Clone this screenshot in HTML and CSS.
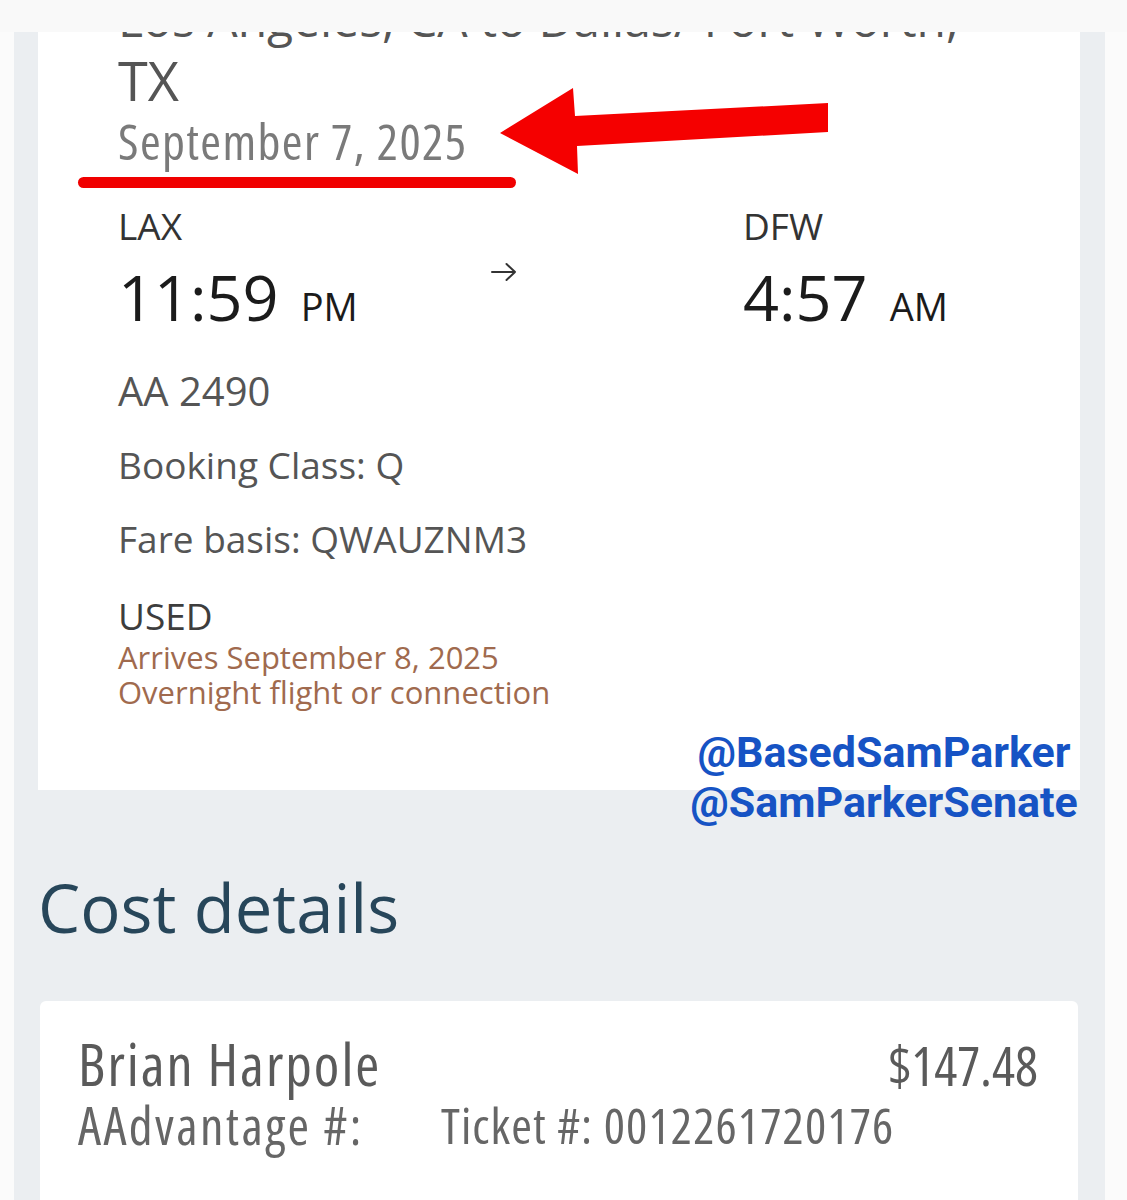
FILE: index.html
```html
<!DOCTYPE html>
<html lang="en">
<head>
<meta charset="utf-8">
<title>Trip details</title>
<link rel="stylesheet" href="styles.css">
</head>
<body>
<div class="page">
  <div class="panel">
    <section class="card trip">
      <div class="route">Los Angeles, CA to Dallas/ Fort Worth,</div>
      <div class="route-end">TX</div>
      <div class="date">September 7, 2025</div>
      <div class="legs">
        <div class="leg">
          <div class="code">LAX</div>
          <div class="time">11:59<span class="ampm">PM</span></div>
        </div>
        <div class="leg-arrow">
          <svg width="28" height="22" viewBox="0 0 28 22" aria-hidden="true"><path d="M2 11H25M16.5 3L25 11L16.5 19" fill="none" stroke="#333" stroke-width="2" stroke-linecap="round" stroke-linejoin="round"/></svg>
        </div>
        <div class="leg">
          <div class="code">DFW</div>
          <div class="time">4:57<span class="ampm">AM</span></div>
        </div>
      </div>
      <div class="info flight">AA 2490</div>
      <div class="info">Booking Class: Q</div>
      <div class="info">Fare basis: QWAUZNM3</div>
      <div class="status">USED</div>
      <div class="note">Arrives September 8, 2025<br>Overnight flight or connection</div>
    </section>
    <h2 class="section-title">Cost details</h2>
    <section class="card cost">
      <div class="cost-row">
        <span class="name">Brian Harpole</span>
        <span class="price">$147.48</span>
      </div>
      <div class="cost-sub">
        <span class="aadv">AAdvantage #:</span>
        <span class="ticket">Ticket #: 0012261720176</span>
      </div>
    </section>
  </div>
</div>

<div class="appbar"></div>

<svg class="annot" width="1127" height="200" viewBox="0 0 1127 200" aria-hidden="true">
  <polygon points="500,133 573,88 575,116 828,103 828,132 577,146 578,174" fill="#f50000"/>
  <rect x="78" y="177" width="438" height="11" rx="5.5" fill="#f00000"/>
</svg>

<div class="watermark">@BasedSamParker<br>@SamParkerSenate</div>
</body>
</html>
```

FILE: styles.css
```css
* { box-sizing: border-box; }
html, body { margin: 0; padding: 0; }
body {
  font-family: "Open Sans", "Noto Sans", sans-serif;
  background: #fbfbfb;
  width: 1127px;
  height: 1200px;
  overflow: hidden;
  position: relative;
}
.page {
  padding: 0 22px 0 14px;
}
.panel {
  background: #ebeef1;
  padding: 0 25px 0 24px;
  min-height: 1200px;
}
.card {
  background: #ffffff;
}
.trip {
  padding: 0 0 80px 80px;
  overflow: hidden;
}
.route {
  font-size: 48px;
  line-height: 62px;
  margin-top: -12px;
  color: #555;
  white-space: nowrap;
}
.route-end {
  font-size: 54px;
  line-height: 62px;
  margin-top: -1px;
  color: #555;
}
.date {
  font-size: 50px;
  line-height: 50px;
  margin-top: 5px;
  color: #7a7a7a;
  font-stretch: 75%;
  letter-spacing: 1.4px;
}
.legs {
  display: grid;
  grid-template-columns: 372px 253px 1fr;
  margin-top: 40px;
}
.code {
  font-size: 37px;
  line-height: 40px;
  color: #333;
}
.time {
  font-size: 63px;
  line-height: 70px;
  margin-top: 16px;
  color: #1b1b1b;
}
.ampm {
  font-size: 38px;
  margin-left: 22px;
}
.leg-arrow {
  padding-top: 55px;
}
.info {
  font-size: 37px;
  line-height: 46px;
  margin-top: 28px;
  color: #555;
}
.info.flight {
  margin-top: 27px;
  font-size: 40px;
}
.status {
  font-size: 37px;
  line-height: 40px;
  margin-top: 34px;
  color: #3d3d3d;
}
.note {
  font-size: 31px;
  line-height: 35px;
  margin-top: 4px;
  color: #a06a4e;
}
.section-title {
  margin: 77px 0 0 0;
  font-size: 67px;
  line-height: 80px;
  font-weight: 400;
  color: #27465a;
}
.cost {
  margin: 54px 2px 0 2px;
  padding: 36px 40px 40px 38px;
  border-radius: 6px;
  min-height: 220px;
}
.cost-row {
  display: flex;
  justify-content: space-between;
  align-items: baseline;
  line-height: 54px;
  color: #5a5a5a;
  font-stretch: 75%;
}
.name {
  font-size: 58px;
  letter-spacing: 2px;
}
.price {
  font-size: 54px;
}
.cost-sub {
  display: flex;
  margin-top: 9px;
  font-size: 52px;
  line-height: 48px;
  color: #666;
  font-stretch: 75%;
}
.aadv {
  letter-spacing: 2.4px;
  width: 363px;
}
.ticket {
  font-size: 50px;
  letter-spacing: 1.1px;
}
.appbar {
  position: absolute;
  top: 0;
  left: 0;
  width: 1127px;
  height: 32px;
  background: #f9f9f9;
}
.annot {
  position: absolute;
  top: 0;
  left: 0;
}
.watermark {
  position: absolute;
  top: 727px;
  left: 664px;
  width: 440px;
  text-align: center;
  font-family: Roboto, "Liberation Sans", sans-serif;
  font-weight: 700;
  font-size: 43px;
  line-height: 50px;
  color: #1653c4;
}
```
